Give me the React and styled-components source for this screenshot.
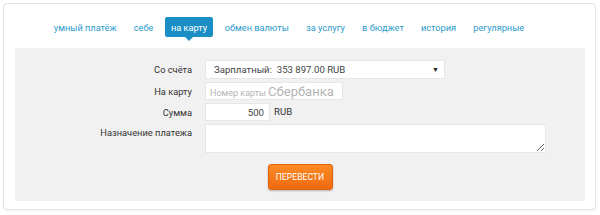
import React, { useState } from "react";
import styled, { createGlobalStyle } from "styled-components";

const GlobalStyle = createGlobalStyle`
	html, body {
		margin: 0;
		padding: 0;
		background: #ffffff;
		font-family: "Roboto", "Open Sans", "Liberation Sans", sans-serif;
	}
`;

const tabs = [
	"умный платёж",
	"себе",
	"на карту",
	"обмен валюты",
	"за услугу",
	"в бюджет",
	"история",
	"регулярные",
];

const Page = styled.div`
	width: 600px;
	height: 215px;
	padding: 3px 4px 5px 3px;
	box-sizing: border-box;
`;

const Card = styled.div`
	height: 100%;
	box-sizing: border-box;
	border: 1px solid #e4e4e4;
	border-radius: 4px;
	background: #fff;
	padding: 12px 10px 8px 11px;
	display: flex;
	flex-direction: column;
	box-shadow: 0 1px 2px rgba(0, 0, 0, 0.05);
`;

const Tabs = styled.nav`
	display: flex;
	justify-content: center;
	height: 20px;
	margin: 1px 0 11px 0;
	padding-right: 22px;
`;

const Tab = styled.span`
	position: relative;
	display: flex;
	align-items: center;
	padding: 0 ${(p) => (p.$active ? "6px" : "8.6px")};
	margin: 0 ${(p) => (p.$active ? "3px" : "0")};
	font-size: 9.2px;
	color: ${(p) => (p.$active ? "#fff" : "#2a9ac9")};
	background: ${(p) => (p.$active ? "#1b8ec6" : "transparent")};
	border-radius: 2px;
	cursor: pointer;
	white-space: nowrap;

	&::after {
		content: "";
		display: ${(p) => (p.$active ? "block" : "none")};
		position: absolute;
		left: 50%;
		bottom: -4px;
		margin-left: -4px;
		border-left: 4px solid transparent;
		border-right: 4px solid transparent;
		border-top: 4px solid #1b8ec6;
	}
`;

const Panel = styled.section`
	flex: 1;
	background: #f1f1f1;
	border-radius: 2px;
	padding: 12px 0 0 0;
	display: flex;
	flex-direction: column;
`;

const Form = styled.div`
	display: grid;
	grid-template-columns: 177px 1fr;
	column-gap: 13px;
	row-gap: 3px;
	align-items: center;
`;

const Label = styled.label`
	font-size: 9.3px;
	color: #333;
	text-align: right;
	align-self: ${(p) => (p.$top ? "start" : "center")};
	padding-top: ${(p) => (p.$top ? "3px" : "0")};
`;

const Field = styled.div`
	display: flex;
	align-items: center;
	gap: 4px;
`;

const Select = styled.div`
	width: 240px;
	height: 19px;
	box-sizing: border-box;
	background: #fff;
	border: 1px solid #e6e6e6;
	display: flex;
	align-items: center;
	justify-content: space-between;
	padding: 0 5px 0 8px;
	font-size: 9.6px;
	color: #444;

	span.arrow {
		font-size: 7px;
		color: #222;
	}
`;

const CardInput = styled.div`
	width: 138px;
	height: 18px;
	box-sizing: border-box;
	background: #fff;
	border: 1px solid #e6e6e6;
	display: flex;
	align-items: baseline;
	padding: 1px 5px 0 4px;
	color: #b4b4b4;
	white-space: nowrap;
	overflow: hidden;
`;

const Hint = styled.span`
	font-size: ${(p) => p.$size}px;
	margin-right: 2px;
	line-height: 16px;
`;

const AmountInput = styled.input`
	width: 65px;
	height: 18px;
	box-sizing: border-box;
	border: 1px solid #e6e6e6;
	background: #fff;
	text-align: right;
	font-family: inherit;
	font-size: 9.6px;
	color: #444;
	padding: 0 5px;
	outline: none;
`;

const Unit = styled.span`
	font-size: 9.6px;
	color: #333;
	margin-top: -2px;
`;

const TextArea = styled.textarea`
	width: 341px;
	height: 29px;
	box-sizing: border-box;
	border: 1px solid #e6e6e6;
	background: #fff;
	resize: vertical;
	font-family: inherit;
	font-size: 10px;
	outline: none;
	margin: 0;
	display: block;
`;

const Actions = styled.div`
	display: flex;
	justify-content: center;
	padding: 11px 0 0 0;
`;

const Button = styled.button`
	width: 65px;
	height: 26px;
	border: 1px solid #e0620e;
	border-radius: 3px;
	background: linear-gradient(#fb8a26, #f06a0f);
	box-shadow: 0 1px 2px rgba(0, 0, 0, 0.25);
	color: #fff;
	font-family: inherit;
	font-size: 8.6px;
	text-transform: uppercase;
	cursor: pointer;
	padding: 0;
`;

export default function App() {
	const [active, setActive] = useState("на карту");
	const [amount, setAmount] = useState("500");

	return (
		<Page>
			<GlobalStyle />
			<Card>
				<Tabs>
					{tabs.map((t) => (
						<Tab key={t} $active={t === active} onClick={() => setActive(t)}>
							{t}
						</Tab>
					))}
				</Tabs>
				<Panel>
					<Form>
						<Label>Со счёта</Label>
						<Field>
							<Select>
								<span>Зарплатный:&nbsp;&nbsp;353 897.00 RUB</span>
								<span className="arrow">▼</span>
							</Select>
						</Field>
						<Label>На карту</Label>
						<Field>
							<CardInput>
								<Hint $size={9}>Номер карты</Hint>
								<Hint $size={13}>Сбербанка</Hint>
							</CardInput>
						</Field>
						<Label>Сумма</Label>
						<Field>
							<AmountInput
								value={amount}
								onChange={(e) => setAmount(e.target.value)}
							/>
							<Unit>RUB</Unit>
						</Field>
						<Label $top>Назначение платежа</Label>
						<Field>
							<TextArea />
						</Field>
					</Form>
					<Actions>
						<Button>Перевести</Button>
					</Actions>
				</Panel>
			</Card>
		</Page>
	);
}
